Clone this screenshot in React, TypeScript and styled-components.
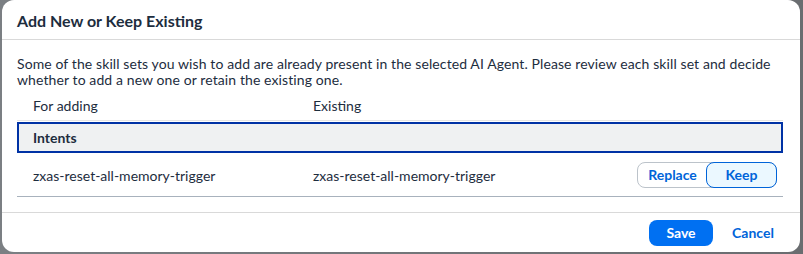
import React, { useState } from 'react';
import styled, { createGlobalStyle } from 'styled-components';

const GlobalStyle = createGlobalStyle`
  html, body {
    margin: 0;
    padding: 0;
    background: #6f7377;
    font-family: Lato, "Noto Sans", Arial, sans-serif;
    color: #1d2d3e;
  }
`;

const Backdrop = styled.div`
  width: 803px;
  height: 254px;
  padding: 0 3px 2px 2px;
  box-sizing: border-box;
  background: linear-gradient(90deg, #7b7f83 0%, #6a6d70 100%);
`;

const Dialog = styled.div`
  height: 100%;
  background: #ffffff;
  border-radius: 12px;
  display: flex;
  flex-direction: column;
  overflow: hidden;
`;

const Header = styled.div`
  height: 39px;
  padding: 0 16px 0 15px;
  display: flex;
  align-items: center;
  border-bottom: 1px solid #d9d9d9;
  flex-shrink: 0;
`;

const Title = styled.h1`
  margin: 0;
  font-size: 16px;
  font-weight: 700;
  color: #1d2d3e;
  padding-top: 1px;
`;

const Content = styled.div`
  flex: 1;
  padding: 16px 16px 0 15px;
`;

const Intro = styled.p`
  margin: 0;
  font-size: 14px;
  line-height: 16px;
  letter-spacing: 0.1px;
  color: #1d2d3e;
`;

const Table = styled.div`
  margin-top: 1px;
  width: 766px;
`;

const Row = styled.div<{ $height: number; $border?: boolean }>`
  display: grid;
  grid-template-columns: 280px 1fr auto;
  align-items: center;
  height: ${(p) => p.$height}px;
  padding: 0 6px 0 16px;
  box-sizing: border-box;
  border-bottom: ${(p) => (p.$border ? '1px solid #a8b2bd' : 'none')};
  font-size: 14px;
`;

const HeadCell = styled.div`
  color: #1d2d3e;
  padding-top: 2px;
`;

const GroupRow = styled.div`
  height: 33px;
  border-top: 1px solid #e5e5e5;
  display: flex;
  align-items: center;
  box-sizing: border-box;
`;

const GroupInner = styled.div`
  flex: 1;
  height: 31px;
  background: #eff1f2;
  border: 2px solid #0032a5;
  box-sizing: border-box;
  display: flex;
  align-items: center;
  padding-left: 14px;
  font-size: 14px;
  font-weight: 700;
  color: #1d2d3e;
`;

const Cell = styled.div`
  color: #1d2d3e;
  padding-top: 1px;
`;

const Segmented = styled.div`
  display: flex;
  height: 26px;
  border: 1px solid #bcc3ca;
  border-radius: 8px;
  box-sizing: border-box;
`;

const SegButton = styled.button<{ $selected?: boolean }>`
  font-family: inherit;
  font-size: 14px;
  font-weight: 700;
  color: #0064d9;
  background: ${(p) => (p.$selected ? '#ebf8ff' : 'transparent')};
  border: ${(p) => (p.$selected ? '1px solid #0064d9' : '1px solid transparent')};
  border-radius: 8px;
  margin: -1px;
  padding: 0;
  width: 71px;
  cursor: pointer;
`;

const Footer = styled.div`
  height: 39px;
  border-top: 1px solid #d9d9d9;
  display: flex;
  align-items: center;
  justify-content: flex-end;
  gap: 9px;
  padding: 0 16px 0 16px;
  flex-shrink: 0;
`;

const PrimaryButton = styled.button`
  font-family: inherit;
  font-size: 14px;
  font-weight: 700;
  color: #ffffff;
  background: #0070f2;
  border: none;
  border-radius: 8px;
  height: 26px;
  width: 64px;
  cursor: pointer;
`;

const TransparentButton = styled.button`
  font-family: inherit;
  font-size: 14px;
  font-weight: 700;
  color: #0064d9;
  background: transparent;
  border: none;
  height: 26px;
  width: 62px;
  cursor: pointer;
`;

const App = () => {
  const [choice, setChoice] = useState<'replace' | 'keep'>('keep');

  return (
    <>
      <GlobalStyle />
      <Backdrop>
        <Dialog>
          <Header>
            <Title>Add New or Keep Existing</Title>
          </Header>
          <Content>
            <Intro>
              Some of the skill sets you wish to add are already present in the selected AI Agent. Please review each
              skill set and decide whether to add a new one or retain the existing one.
            </Intro>
            <Table>
              <Row $height={31}>
                <HeadCell>For adding</HeadCell>
                <HeadCell>Existing</HeadCell>
                <span />
              </Row>
              <GroupRow>
                <GroupInner>Intents</GroupInner>
              </GroupRow>
              <Row $height={44} $border>
                <Cell>zxas-reset-all-memory-trigger</Cell>
                <Cell>zxas-reset-all-memory-trigger</Cell>
                <Segmented>
                  <SegButton $selected={choice === 'replace'} onClick={() => setChoice('replace')}>
                    Replace
                  </SegButton>
                  <SegButton $selected={choice === 'keep'} onClick={() => setChoice('keep')}>
                    Keep
                  </SegButton>
                </Segmented>
              </Row>
            </Table>
          </Content>
          <Footer>
            <PrimaryButton>Save</PrimaryButton>
            <TransparentButton>Cancel</TransparentButton>
          </Footer>
        </Dialog>
      </Backdrop>
    </>
  );
};

export default App;
